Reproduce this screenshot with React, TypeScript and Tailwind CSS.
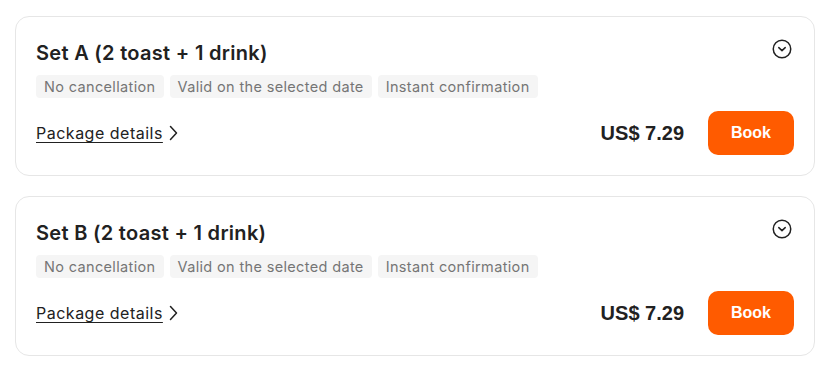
import React from "react";

function ChevronCircle() {
  return (
    <svg width="20" height="20" viewBox="0 0 20 20" fill="none" className="mr-[2px] mt-[2px]">
      <circle cx="10" cy="10" r="8.75" stroke="#212121" strokeWidth="1.5" />
      <path d="M6.8 8.6 L10 11.6 L13.2 8.6" stroke="#212121" strokeWidth="1.5" strokeLinecap="round" strokeLinejoin="round" />
    </svg>
  );
}

function ChevronRight() {
  return (
    <svg width="12" height="16" viewBox="0 0 12 16" fill="none" className="ml-[4px]">
      <path d="M3.5 1.5 L9.5 8 L3.5 14.5" stroke="#212121" strokeWidth="1.5" strokeLinecap="round" strokeLinejoin="round" />
    </svg>
  );
}

function Card({ title }: { title: string }) {
  const tags = ["No cancellation", "Valid on the selected date", "Instant confirmation"];
  return (
    <div className="w-[800px] rounded-[14px] border border-[#e6e6e6] bg-white px-5 pt-5 pb-5">
      <div className="flex items-start justify-between">
        <div className="mt-[2px] text-[20px] leading-[28px] font-semibold tracking-[0.3px] text-[#212121]">{title}</div>
        <ChevronCircle />
      </div>
      <div className="mt-[8px] flex gap-[6px]">
        {tags.map((t) => (
          <span key={t} className="rounded-[4px] bg-[#f5f5f5] px-[8px] text-[14.5px] leading-[23px] tracking-[0.35px] text-[#757575]">
            {t}
          </span>
        ))}
      </div>
      <div className="mt-[13px] flex items-center justify-between">
        <div className="flex items-center text-[16px] tracking-[0.5px] text-[#212121]">
          <span className="underline underline-offset-[3px] decoration-1">Package details</span>
          <ChevronRight />
        </div>
        <div className="flex items-center gap-6">
          <span className="text-[20px] font-bold text-[#212121]" style={{ fontFamily: "'Liberation Sans', Arial, sans-serif" }}>US$ 7.29</span>
          <button className="h-[44px] w-[86px] rounded-[10px] bg-[#ff5b00] text-[16px] font-bold text-white" style={{ fontFamily: "'Liberation Sans', Arial, sans-serif" }}>
            Book
          </button>
        </div>
      </div>
    </div>
  );
}

export default function App() {
  return (
    <div className="h-[389px] w-[821px] bg-white pt-[16px] pl-[15px]" style={{ fontFamily: "Inter, 'Open Sans', sans-serif" }}>
      <div className="flex flex-col gap-[20px]">
        <Card title="Set A (2 toast + 1 drink)" />
        <Card title="Set B (2 toast + 1 drink)" />
      </div>
    </div>
  );
}
